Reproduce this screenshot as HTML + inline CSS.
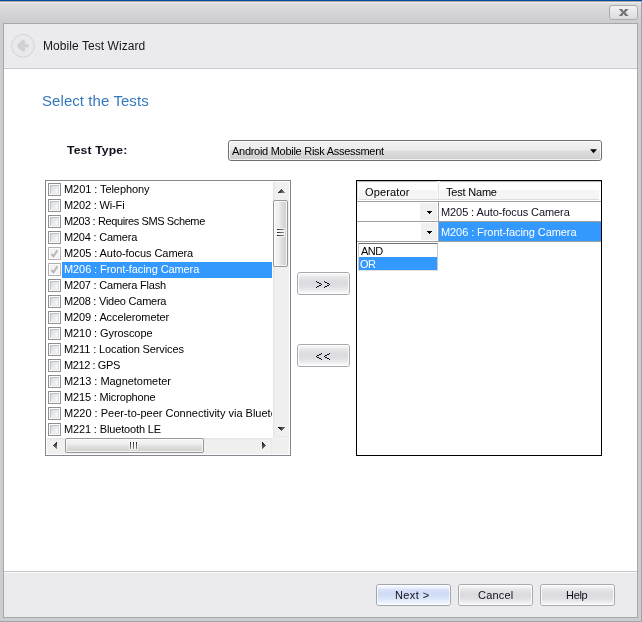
<!DOCTYPE html>
<html><head><meta charset="utf-8">
<style>
*{margin:0;padding:0;box-sizing:border-box}
html,body{width:642px;height:622px;overflow:hidden;background:#cdcdcf;font-family:"Liberation Sans",sans-serif}
.a{position:absolute}
.t{position:absolute;white-space:nowrap;will-change:transform}
#title{left:0;top:0;width:642px;height:23px;background:linear-gradient(#dededf 10%,#cccccf)}
#panel{left:3px;top:23px;width:635px;height:595px;border:1px solid #a3a7ae;background:#ebebed}
#hdr{left:4px;top:24px;width:633px;height:45px;background:#ebebed}
#white{left:4px;top:69px;width:633px;height:502px;background:#fff}
.btn{position:absolute;border:1px solid #a6a9ae;border-radius:3px;background:linear-gradient(#fdfdfd 0px,#f2f2f2 2px,#e4e4e6 5px,#dcdce0 9px,#dedee2 13px,#ececee 17px,#fafafa 20px)}
.nb{border-color:#9fa4ad;background:linear-gradient(#fdfdff 0px,#f3f6fd 2px,#d7e0f8 5px,#cfdbf5 9px,#d6e4f6 13px,#e8f0fb 17px,#fbfcff 20px)}
.btn:before{content:"";position:absolute;left:0;top:0;right:0;bottom:0;border:1px solid rgba(255,255,255,.8);border-radius:2px}
.list{position:absolute;border:1px solid #828790;background:#fff}
.li{letter-spacing:0px}
.row{position:absolute;left:0;height:16px;font-size:11px;line-height:16px;color:#000;white-space:nowrap}
.cb{position:absolute;width:13px;height:13px;border:1px solid #8e8f8f;background:#fff}
.cb i{position:absolute;left:1px;top:1px;width:9px;height:9px;border:1px solid;border-color:#bbc1c9 #d8dce1 #e2e4e7 #bbc1c9;background:linear-gradient(135deg,#d3d8df,#eef0f2 60%,#f8f8f9)}
.cb.ck{border-color:#b1b1b1}
.cb.ck i{border-color:#f2f2f2;background:#f4f4f4}
</style></head><body>
<div id="title" class="a"></div>
<div class="a" style="left:0;top:0;width:642px;height:1px;background:#004a9e"></div>
<div class="a" style="left:0;top:1px;width:642px;height:1px;background:#aaa7a6"></div>
<div class="a" style="left:0;top:2px;width:642px;height:1px;background:#eeeef0"></div>
<div class="a" style="left:641px;top:2px;width:1px;height:620px;background:#a2a5ab"></div>
<div class="a" style="left:0;top:621px;width:642px;height:1px;background:#a2a5ab"></div>
<!-- close button -->
<div class="a" style="left:609px;top:5px;width:29px;height:15px;border:1px solid #a9acb3;border-radius:3px;background:linear-gradient(#f2f2f4,#dcdce0)">
  <svg class="a" style="left:8px;top:2px" width="12" height="10" viewBox="0 0 12 10"><path d="M0.8 1H4.1L5.7 3.2L7.3 1H10.6L7.4 4.5L10.6 8H7.3L5.7 5.8L4.1 8H0.8L4 4.5Z" fill="#737479"/></svg>
</div>
<div id="panel" class="a"></div>
<div id="hdr" class="a"></div>
<div class="a" style="left:4px;top:67px;width:633px;height:1px;background:#f0f0f2"></div>
<div class="a" style="left:4px;top:68px;width:633px;height:1px;background:#c6c8cc"></div>
<div id="white" class="a"></div>
<div class="a" style="left:4px;top:571px;width:633px;height:1px;background:#c4c6ca"></div>
<div class="a" style="left:4px;top:572px;width:633px;height:1px;background:#fcfcfc"></div>

<!-- back icon -->
<svg class="a" style="left:10px;top:33px" width="26" height="26" viewBox="0 0 26 26">
  <circle cx="13" cy="12.8" r="11.4" fill="#e9e9eb" stroke="#d3d3d5" stroke-width="1"/>
  <path d="M13.3 8.9L9.2 12.7L13.3 16.5" stroke="#d0d0d2" stroke-width="4.2" stroke-linecap="round" stroke-linejoin="round" fill="none"/><path d="M11 12.7H17.2" stroke="#d0d0d2" stroke-width="3.5" stroke-linecap="round" fill="none"/>
</svg>
<div class="t m" style="left:43px;top:38px;font-size:12px;line-height:16px;color:#16161e;letter-spacing:0.06px">Mobile Test Wizard</div>
<div class="t m" style="left:42px;top:91px;font-size:15px;line-height:20px;color:#3579bd;letter-spacing:0.07px">Select the Tests</div>
<div class="t m" style="left:67px;top:142px;font-size:11px;line-height:16px;font-weight:bold;color:#10101e;letter-spacing:0.1px;transform:scaleX(1.11);transform-origin:0 0">Test Type:</div>

<!-- combo -->
<div class="a" style="left:228px;top:140px;width:374px;height:21px;border:1px solid #707070;border-radius:3px;background:linear-gradient(#f2f2f2 0%,#ebebeb 48%,#dddddd 52%,#cfcfcf 100%)">
  <div class="a" style="left:0;top:0;right:0;bottom:0;border:1px solid rgba(255,255,255,.7);border-radius:2px"></div>
  <div class="t m" style="left:3px;top:2px;font-size:11px;line-height:16px;color:#000;letter-spacing:-0.28px">Android Mobile Risk Assessment</div>
  <svg class="a" style="left:361px;top:8px" width="8" height="5" viewBox="0 0 8 5"><path d="M0 0.2H7L3.5 4.2Z" fill="#000"/></svg>
</div>

<!-- left list -->
<div class="list" style="left:45px;top:180px;width:246px;height:276px"></div>
<div id="rows">
<div class="a" style="left:47px;top:182px;width:225px;height:255px;overflow:hidden">
<div class="cb" style="left:1px;top:1px"><i></i></div>
<div class="t m li" style="left:17px;top:-1px;font-size:11px;line-height:16px;color:#000;letter-spacing:-0.07px">M201 : Telephony</div>
<div class="cb" style="left:1px;top:17px"><i></i></div>
<div class="t m li" style="left:17px;top:15px;font-size:11px;line-height:16px;color:#000;letter-spacing:-0.16px">M202 : Wi-Fi</div>
<div class="cb" style="left:1px;top:33px"><i></i></div>
<div class="t m li" style="left:17px;top:31px;font-size:11px;line-height:16px;color:#000;letter-spacing:-0.39px">M203 : Requires SMS Scheme</div>
<div class="cb" style="left:1px;top:49px"><i></i></div>
<div class="t m li" style="left:17px;top:47px;font-size:11px;line-height:16px;color:#000;letter-spacing:-0.21px">M204 : Camera</div>
<div class="cb ck" style="left:1px;top:65px"><i></i><svg class="a" style="left:0;top:0" width="11" height="11" viewBox="0 0 11 11"><path d="M2.3 5.8L4.5 8.3L8.4 2.2" stroke="#b6b6b6" stroke-width="1.9" fill="none" stroke-linejoin="round"/></svg></div>
<div class="t m li" style="left:17px;top:63px;font-size:11px;line-height:16px;color:#000;letter-spacing:-0.07px">M205 : Auto-focus Camera</div>
<div class="a" style="left:15px;top:80px;width:210px;height:16px;background:#3399ff"></div>
<div class="cb ck" style="left:1px;top:81px"><i></i><svg class="a" style="left:0;top:0" width="11" height="11" viewBox="0 0 11 11"><path d="M2.3 5.8L4.5 8.3L8.4 2.2" stroke="#b6b6b6" stroke-width="1.9" fill="none" stroke-linejoin="round"/></svg></div>
<div class="t m li" style="left:17px;top:79px;font-size:11px;line-height:16px;color:#fff;letter-spacing:-0.09px">M206 : Front-facing Camera</div>
<div class="cb" style="left:1px;top:97px"><i></i></div>
<div class="t m li" style="left:17px;top:95px;font-size:11px;line-height:16px;color:#000;letter-spacing:-0.2px">M207 : Camera Flash</div>
<div class="cb" style="left:1px;top:113px"><i></i></div>
<div class="t m li" style="left:17px;top:111px;font-size:11px;line-height:16px;color:#000;letter-spacing:-0.24px">M208 : Video Camera</div>
<div class="cb" style="left:1px;top:129px"><i></i></div>
<div class="t m li" style="left:17px;top:127px;font-size:11px;line-height:16px;color:#000;letter-spacing:-0.1px">M209 : Accelerometer</div>
<div class="cb" style="left:1px;top:145px"><i></i></div>
<div class="t m li" style="left:17px;top:143px;font-size:11px;line-height:16px;color:#000;letter-spacing:-0.09px">M210 : Gyroscope</div>
<div class="cb" style="left:1px;top:161px"><i></i></div>
<div class="t m li" style="left:17px;top:159px;font-size:11px;line-height:16px;color:#000;letter-spacing:-0.12px">M211 : Location Services</div>
<div class="cb" style="left:1px;top:177px"><i></i></div>
<div class="t m li" style="left:17px;top:175px;font-size:11px;line-height:16px;color:#000;letter-spacing:-0.41px">M212 : GPS</div>
<div class="cb" style="left:1px;top:193px"><i></i></div>
<div class="t m li" style="left:17px;top:191px;font-size:11px;line-height:16px;color:#000;letter-spacing:-0.04px">M213 : Magnetometer</div>
<div class="cb" style="left:1px;top:209px"><i></i></div>
<div class="t m li" style="left:17px;top:207px;font-size:11px;line-height:16px;color:#000;letter-spacing:-0.16px">M215 : Microphone</div>
<div class="cb" style="left:1px;top:225px"><i></i></div>
<div class="t m li" style="left:17px;top:223px;font-size:11px;line-height:16px;color:#000;letter-spacing:0px">M220 : Peer-to-peer Connectivity via Bluetooth</div>
<div class="cb" style="left:1px;top:241px"><i></i></div>
<div class="t m li" style="left:17px;top:239px;font-size:11px;line-height:16px;color:#000;letter-spacing:-0.14px">M221 : Bluetooth LE</div>
</div>
</div>


<!-- vertical scrollbar -->
<div class="a" style="left:273px;top:182px;width:16px;height:255px;background:linear-gradient(90deg,#e3e3e3,#f0f0f0 15%,#f0f0f0)"></div>
<svg class="a" style="left:278px;top:189px" width="7" height="4" shape-rendering="crispEdges"><defs><linearGradient id="gu278189" gradientUnits="userSpaceOnUse" x1="0" y1="0" x2="7" y2="4"><stop offset="0" stop-color="#000"/><stop offset="1" stop-color="#9a9a9a"/></linearGradient></defs><g fill="url(#gu278189)"><rect x="3" y="0" width="1" height="1"/><rect x="2" y="1" width="3" height="1"/><rect x="1" y="2" width="5" height="1"/><rect x="0" y="3" width="7" height="1"/></g></svg>
<div class="a" style="left:273px;top:200px;width:15px;height:67px;border:1px solid #979797;border-radius:2px;background:linear-gradient(90deg,#f6f6f6 0%,#efefef 35%,#dddddd 62%,#d3d3d3 88%,#dedede 100%)"></div>
<div class="a" style="left:274px;top:201px;width:13px;height:65px;border:1px solid rgba(255,255,255,.7);border-radius:1px"></div>
<div class="a" style="left:276px;top:228px;width:9px;height:3px;background:rgba(255,255,255,.6)"></div><div class="a" style="left:277px;top:229px;width:7px;height:1px;background:linear-gradient(90deg,#1a1a1a,#555 40%,#8a8a8a)"></div>
<div class="a" style="left:276px;top:231px;width:9px;height:3px;background:rgba(255,255,255,.6)"></div><div class="a" style="left:277px;top:232px;width:7px;height:1px;background:linear-gradient(90deg,#1a1a1a,#555 40%,#8a8a8a)"></div>
<div class="a" style="left:276px;top:234px;width:9px;height:3px;background:rgba(255,255,255,.6)"></div><div class="a" style="left:277px;top:235px;width:7px;height:1px;background:linear-gradient(90deg,#1a1a1a,#555 40%,#8a8a8a)"></div>
<svg class="a" style="left:278px;top:427px" width="7" height="4" shape-rendering="crispEdges"><defs><linearGradient id="gu278427" gradientUnits="userSpaceOnUse" x1="0" y1="0" x2="7" y2="4"><stop offset="0" stop-color="#000"/><stop offset="1" stop-color="#9a9a9a"/></linearGradient></defs><g fill="url(#gu278427)"><rect x="3" y="3" width="1" height="1"/><rect x="2" y="2" width="3" height="1"/><rect x="1" y="1" width="5" height="1"/><rect x="0" y="0" width="7" height="1"/></g></svg>
<!-- horizontal scrollbar -->
<div class="a" style="left:47px;top:438px;width:242px;height:16px;background:linear-gradient(#e3e3e3,#f0f0f0 15%,#f0f0f0)"></div>
<svg class="a" style="left:53px;top:442px" width="4" height="7" shape-rendering="crispEdges"><defs><linearGradient id="gl53442" gradientUnits="userSpaceOnUse" x1="0" y1="0" x2="4" y2="7"><stop offset="0" stop-color="#000"/><stop offset="1" stop-color="#9a9a9a"/></linearGradient></defs><g fill="url(#gl53442)"><rect x="0" y="3" width="1" height="1"/><rect x="1" y="2" width="1" height="3"/><rect x="2" y="1" width="1" height="5"/><rect x="3" y="0" width="1" height="7"/></g></svg>
<div class="a" style="left:65px;top:438px;width:139px;height:15px;border:1px solid #979797;border-radius:2px;background:linear-gradient(#f6f6f6 0%,#efefef 35%,#dddddd 62%,#d3d3d3 88%,#dedede 100%)"></div>
<div class="a" style="left:66px;top:439px;width:137px;height:13px;border:1px solid rgba(255,255,255,.7);border-radius:1px"></div>
<div class="a" style="left:129px;top:441px;width:3px;height:9px;background:rgba(255,255,255,.6)"></div><div class="a" style="left:130px;top:442px;width:1px;height:7px;background:linear-gradient(#1a1a1a,#555 40%,#8a8a8a)"></div>
<div class="a" style="left:132px;top:441px;width:3px;height:9px;background:rgba(255,255,255,.6)"></div><div class="a" style="left:133px;top:442px;width:1px;height:7px;background:linear-gradient(#1a1a1a,#555 40%,#8a8a8a)"></div>
<div class="a" style="left:135px;top:441px;width:3px;height:9px;background:rgba(255,255,255,.6)"></div><div class="a" style="left:136px;top:442px;width:1px;height:7px;background:linear-gradient(#1a1a1a,#555 40%,#8a8a8a)"></div>
<svg class="a" style="left:262px;top:442px" width="4" height="7" shape-rendering="crispEdges"><defs><linearGradient id="gl262442" gradientUnits="userSpaceOnUse" x1="0" y1="0" x2="4" y2="7"><stop offset="0" stop-color="#000"/><stop offset="1" stop-color="#9a9a9a"/></linearGradient></defs><g fill="url(#gl262442)"><rect x="3" y="3" width="1" height="1"/><rect x="2" y="2" width="1" height="3"/><rect x="1" y="1" width="1" height="5"/><rect x="0" y="0" width="1" height="7"/></g></svg>
<div class="a" style="left:272px;top:437px;width:17px;height:17px;background:#f0f0f0"></div><div class="a" style="left:273px;top:436px;width:16px;height:1px;background:#e8e8e8"></div><div class="a" style="left:271px;top:438px;width:1px;height:16px;background:#e8e8e8"></div>

<!-- >> << buttons -->
<div class="btn" style="left:297px;top:272px;width:53px;height:23px"></div><svg class="a" style="left:316px;top:281px" width="14" height="7" shape-rendering="crispEdges" fill="#0a0a14"><rect x="0" y="0" width="1" height="1"/><rect x="1" y="1" width="1" height="1"/><rect x="2" y="1" width="1" height="1"/><rect x="3" y="2" width="1" height="1"/><rect x="4" y="2" width="1" height="1"/><rect x="5" y="3" width="1" height="1"/><rect x="3" y="4" width="1" height="1"/><rect x="4" y="4" width="1" height="1"/><rect x="1" y="5" width="1" height="1"/><rect x="2" y="5" width="1" height="1"/><rect x="0" y="6" width="1" height="1"/><rect x="8" y="0" width="1" height="1"/><rect x="9" y="1" width="1" height="1"/><rect x="10" y="1" width="1" height="1"/><rect x="11" y="2" width="1" height="1"/><rect x="12" y="2" width="1" height="1"/><rect x="13" y="3" width="1" height="1"/><rect x="11" y="4" width="1" height="1"/><rect x="12" y="4" width="1" height="1"/><rect x="9" y="5" width="1" height="1"/><rect x="10" y="5" width="1" height="1"/><rect x="8" y="6" width="1" height="1"/></svg>
<div class="btn" style="left:297px;top:344px;width:53px;height:23px"></div><svg class="a" style="left:316px;top:353px" width="14" height="7" shape-rendering="crispEdges" fill="#0a0a14"><rect x="5" y="0" width="1" height="1"/><rect x="4" y="1" width="1" height="1"/><rect x="3" y="1" width="1" height="1"/><rect x="2" y="2" width="1" height="1"/><rect x="1" y="2" width="1" height="1"/><rect x="0" y="3" width="1" height="1"/><rect x="2" y="4" width="1" height="1"/><rect x="1" y="4" width="1" height="1"/><rect x="4" y="5" width="1" height="1"/><rect x="3" y="5" width="1" height="1"/><rect x="5" y="6" width="1" height="1"/><rect x="13" y="0" width="1" height="1"/><rect x="12" y="1" width="1" height="1"/><rect x="11" y="1" width="1" height="1"/><rect x="10" y="2" width="1" height="1"/><rect x="9" y="2" width="1" height="1"/><rect x="8" y="3" width="1" height="1"/><rect x="10" y="4" width="1" height="1"/><rect x="9" y="4" width="1" height="1"/><rect x="12" y="5" width="1" height="1"/><rect x="11" y="5" width="1" height="1"/><rect x="13" y="6" width="1" height="1"/></svg>

<!-- right listview -->

<div class="a" style="left:356px;top:180px;width:246px;height:276px;border:1px solid #000;background:#fff"></div>
<!-- header -->
<div class="a" style="left:359px;top:190px;width:240px;height:9px;background:#f5f5f6"></div><div class="a" style="left:357px;top:181px;width:244px;height:1px;background:#bdbdbd"></div><div class="a" style="left:357px;top:182px;width:244px;height:1px;background:#f8f8f8"></div><div class="a" style="left:357px;top:181px;width:1px;height:19px;background:#e4e4e4"></div>
<div class="a" style="left:359px;top:199px;width:240px;height:1px;background:#dcdcdc"></div>
<div class="a" style="left:437px;top:181px;width:1px;height:18px;background:#fbfbfb"></div>
<div class="a" style="left:438px;top:181px;width:1px;height:18px;background:#e2e2e2"></div>
<div class="a" style="left:439px;top:181px;width:1px;height:18px;background:#fbfbfb"></div>
<div class="t m" style="left:365px;top:184px;font-size:11px;line-height:16px;color:#000;letter-spacing:0.14px">Operator</div>
<div class="t m" style="left:446px;top:184px;font-size:11px;line-height:16px;color:#000;letter-spacing:-0.2px">Test Name</div>
<!-- grid -->
<div class="a" style="left:357px;top:201px;width:244px;height:1px;background:#a0a0a0"></div>
<div class="a" style="left:357px;top:221px;width:244px;height:1px;background:#a0a0a0"></div>
<div class="a" style="left:357px;top:241px;width:244px;height:1px;background:#a0a0a0"></div>
<div class="a" style="left:438px;top:202px;width:1px;height:39px;background:#a0a0a0"></div>
<!-- row1 -->
<div class="a" style="left:420px;top:203px;width:17px;height:17px;background:#f0f0f0"></div>
<svg class="a" style="left:427px;top:211px" width="5" height="3" shape-rendering="crispEdges" fill="#000"><rect x="0" y="0" width="5" height="1"/><rect x="1" y="1" width="3" height="1"/><rect x="2" y="2" width="1" height="1"/></svg>
<div class="t m" style="left:441px;top:204px;font-size:11px;line-height:16px;color:#111122;letter-spacing:-0.09px">M205 : Auto-focus Camera</div>
<!-- row2 -->
<div class="a" style="left:421px;top:223px;width:16px;height:17px;background:#f0f0f0"></div>
<svg class="a" style="left:427px;top:231px" width="5" height="3" shape-rendering="crispEdges" fill="#000"><rect x="0" y="0" width="5" height="1"/><rect x="1" y="1" width="3" height="1"/><rect x="2" y="2" width="1" height="1"/></svg>
<div class="a" style="left:439px;top:222px;width:162px;height:19px;background:#3399ff"></div>
<div class="t m" style="left:441px;top:224px;font-size:11px;line-height:16px;color:#fff;letter-spacing:-0.08px">M206 : Front-facing Camera</div>
<!-- popup -->
<div class="a" style="left:358px;top:243px;width:80px;height:28px;border-top:1px solid #707070;border-left:1px solid #c8c8c8;border-right:1px solid #c8c8c8;border-bottom:1px solid #e0e0e0;background:#fff"></div>
<div class="a" style="left:359px;top:257px;width:78px;height:13px;background:#3399ff"></div>
<div class="t m" style="left:361px;top:244px;font-size:11px;line-height:14px;color:#000;letter-spacing:-0.5px">AND</div>
<div class="t m" style="left:360px;top:257px;font-size:11px;line-height:14px;color:#fff;letter-spacing:-0.5px">OR</div>


<!-- footer buttons -->
<div class="btn nb" style="left:376px;top:584px;width:75px;height:22px"></div>
<div class="btn" style="left:458px;top:584px;width:75px;height:22px"></div>
<div class="btn" style="left:540px;top:584px;width:75px;height:22px"></div>
<div class="t m" style="left:395px;top:587px;font-size:11px;line-height:16px;color:#10101c;letter-spacing:0.4px">Next &gt;</div>
<div class="t m" style="left:478px;top:587px;font-size:11px;line-height:16px;color:#10101c;letter-spacing:0.2px">Cancel</div>
<div class="t m" style="left:566px;top:587px;font-size:11px;line-height:16px;color:#10101c;letter-spacing:-0.3px">Help</div>
</body></html>
